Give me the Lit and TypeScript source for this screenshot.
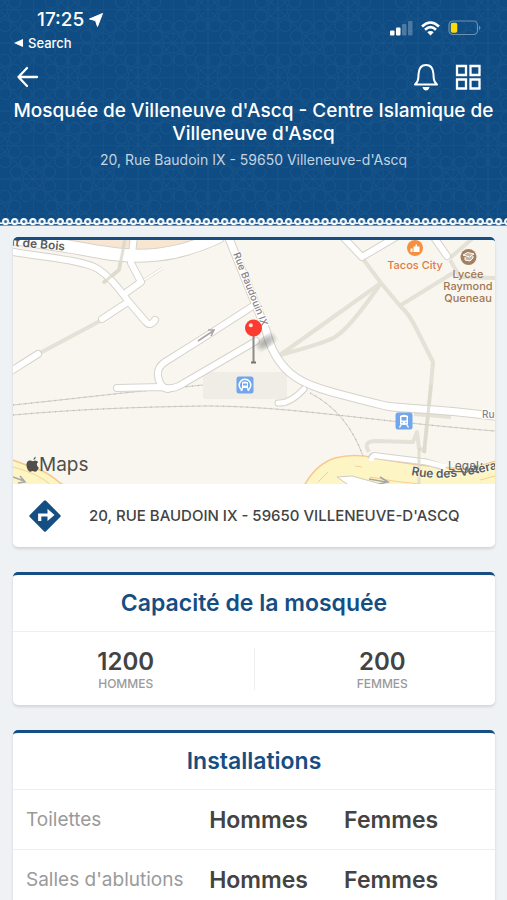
import { LitElement, html, css, svg } from "lit";
import { customElement } from "lit/decorators.js";

const ROADS = [
  { d: "M8 238 C40 241 66 246 100 252 C140 259 175 257 218 237", w: 12 },
  { d: "M8 251 C40 257 84 260 98 269 Q112 278 128 301 L146 322 Q150 327 155 320", w: 6 },
  { d: "M134 236 L131 263 L141 282 L127 292", w: 6 },
  { d: "M128 302 L102 319", w: 6 },
  { d: "M38 354 L8 373", w: 6 },
  { d: "M256 304 L200 340 L165 362 Q157 367 158 376 Q160 388 168 389", w: 6 },
  { d: "M256 341 L184 383 Q172 391 162 387 L117 388", w: 6 },
  { d: "M228 236 L266 330 Q272 357 290 373 C305 386 325 391 386 406 C400 409 430 407 500 417", w: 7 },
  { d: "M278 403 Q290 404 304 389", w: 5 },
  { d: "M342 236 L362 257 L396 237", w: 6 },
  { d: "M433 236 L447 256", w: 6 },
];

const PATHS = [
  "M125 238 L119 270 L103 283",
  "M100 321 L40 353",
  "M363 259 L381 283 L401 307 Q408 312 417 330 L433 362 L431 385 L424 453",
  "M381 283 L280 355",
  "M381 283 Q350 328 335 337 Q325 343 280 355",
  "M401 305 L453 273",
  "M450 258 L472 239",
  "M450 260 L460 277 L496 278",
  "M414 414 L451 417",
  "M369 452 Q362 441 376 441 L413 442 L417 432 L419 448 L426 452",
];

const RAILS = [
  "M13 405 L60 400 L123 393 L203 385",
  "M13 415 C80 409 140 407 203 406 C290 406 360 420 495 431",
  "M310 393 Q347 412 363 456",
];

const star = (x: number, y: number) => svg`
  <circle cx=${x} cy=${y} r="10"></circle>
  ${[0, 1, 2, 3, 4, 5, 6, 7].map((i) => {
    const a = ((i + 0.5) * Math.PI) / 4;
    return svg`<circle cx=${x + 18 * Math.cos(a)} cy=${y + 18 * Math.sin(a)} r="6"></circle>`;
  })}`;

@customElement("mosque-header")
class MosqueHeader extends LitElement {
  static styles = css`
    :host { display: block; position: relative; background: #0e4c83; color: #fff; }
    .pattern { position: absolute; inset: 0; width: 100%; height: 100%; }
    .content { position: relative; min-height: 218px; box-sizing: border-box; }
    .status { display: flex; justify-content: space-between; padding: 9px 26px 0 13px; height: 53px; box-sizing: border-box; }
    .clock { display: flex; align-items: center; gap: 5px; padding-left: 24px; font-size: 19px; line-height: 22px; font-weight: 500; }
    .back-app { display: flex; align-items: center; gap: 5px; color: inherit; text-decoration: none; font-size: 13px; line-height: 24px; font-weight: 500; }
    .signals { display: flex; gap: 8px; align-items: center; height: 38px; }
    .bar { display: flex; justify-content: space-between; padding: 10px 25px 0 16px; }
    .actions { display: flex; gap: 16px; }
    button { background: none; border: 0; padding: 0; color: inherit; display: flex; align-items: center; height: 28px; }
    h1 { margin: 8px 12px 0; font-size: 19px; line-height: 23px; font-weight: 500; text-align: center; }
    p { margin: 5px 12px 0; font-size: 14px; line-height: 20px; text-align: center; color: #c3d3e1; }
    .trim { display: block; position: relative; width: 100%; height: 8px; }
    svg { display: block; }
  `;
  render() {
    return html`
      <svg class="pattern" aria-hidden="true">
        <defs>
          <pattern id="stars" x="33" y="9" width="70" height="68" patternUnits="userSpaceOnUse">
            <g fill="none" stroke="#2a6496" stroke-width="1" opacity=".35">
              ${star(0, 34)}${star(70, 34)}${star(35, 0)}${star(35, 68)}
              <path d="M0 0h70M0 34h70M0 0v68M35 0v68M0 34L35 0L70 34L35 68Z"></path>
            </g>
          </pattern>
        </defs>
        <rect width="100%" height="100%" fill="url(#stars)"></rect>
      </svg>
      <div class="content">
        <div class="status">
          <div>
            <div class="clock">17:25
              <svg width="14" height="14" viewBox="0 0 14 14"><path d="M13.500.5L8.500 13.500L6.500 7.600L.5 6Z" fill="#fff" stroke="#fff" stroke-linejoin="round"></path></svg>
            </div>
            <a class="back-app" href="#search">
              <svg width="10" height="8" viewBox="0 0 10 8"><path d="M1 4L10 0V8Z" fill="#fff"></path></svg>Search</a>
          </div>
          <div class="signals">
            <svg width="23" height="16" viewBox="0 0 23 16" fill="#fff">
              <rect x="0" y="10.500" width="4.500" height="5" rx="1"></rect>
              <rect x="6" y="7.500" width="4.500" height="8" rx="1"></rect>
              <rect x="12" y="4" width="4.500" height="11.500" rx="1" opacity=".25"></rect>
              <rect x="18" y="1" width="4.500" height="14.500" rx="1" opacity=".25"></rect>
            </svg>
            <svg width="19" height="15" viewBox="0 0 19 15" fill="none" stroke="#fff" stroke-width="2.600">
              <path d="M1 5.500Q9.500-2.500 18 5.500M4 8.800Q9.500 3.600 15 8.800"></path>
              <path d="M6.300 11.300Q9.500 8.500 12.700 11.300L9.500 14.500Z" fill="#fff" stroke="none"></path>
            </svg>
            <svg width="33" height="16" viewBox="0 0 33 16">
              <rect x="1" y="1" width="28.500" height="13.500" rx="4" fill="none" stroke="#6d90b1" stroke-width="1.200"></rect>
              <rect x="2.800" y="2.700" width="6.500" height="10" rx="1.800" fill="#fbd90c"></rect>
              <path d="M31 5.500Q34 7.800 31 10.200Z" fill="#6d90b1"></path>
            </svg>
          </div>
        </div>
        <div class="bar">
          <button aria-label="Retour">
            <svg width="23" height="22" viewBox="0 0 23 22" fill="none" stroke="#fff" stroke-width="2.300" stroke-linecap="round" stroke-linejoin="round"><path d="M21 11H2.500M11 2L2.500 11L11 20"></path></svg>
          </button>
          <div class="actions">
            <button aria-label="Notifications">
              <svg width="26" height="28" viewBox="0 0 26 28" fill="none" stroke="#fff" stroke-width="2" stroke-linejoin="round">
                <path d="M2 21.500Q5 19 5.300 15L5.600 10.500Q6.300 2 13 2Q19.700 2 20.400 10.500L20.700 15Q21 19 24 21.500Z"></path>
                <path d="M9.500 24H16.500Q15.500 27.500 13 27.500Q10.500 27.500 9.500 24Z" fill="#fff" stroke="none"></path>
              </svg>
            </button>
            <button aria-label="Menu">
              <svg width="27" height="27" viewBox="0 0 27 27" fill="none" stroke="#fff" stroke-width="2.300">
                <path d="M2 2h9v9h-9zM15.500 2h9v9h-9zM2 15.500h9v9h-9zM15.500 15.500h9v9h-9z"></path>
              </svg>
            </button>
          </div>
        </div>
        <h1>Mosquée de Villeneuve d'Ascq - Centre Islamique de Villeneuve d'Ascq</h1>
        <p>20, Rue Baudoin IX - 59650 Villeneuve-d'Ascq</p>
      </div>
      <svg class="trim" aria-hidden="true">
        <defs>
          <pattern id="lace" x="1" width="9.130" height="8" patternUnits="userSpaceOnUse">
            <path d="M0 7.500H10" stroke="#6f95b8" stroke-width="1"></path>
            <path d="M0 5L1.500 5.500M9.130 5L7.600 5.500" stroke="#fff" stroke-width="1.800"></path>
            <circle cx="4.560" cy="3.600" r="2.600" fill="#2f6698" stroke="#fff" stroke-width="2"></circle>
          </pattern>
        </defs>
        <rect width="100%" height="8" fill="url(#lace)"></rect>
      </svg>`;
  }
}

@customElement("mosque-map")
class MosqueMap extends LitElement {
  static styles = css`
    :host { display: block; }
    svg { display: block; width: 100%; height: 244px; font-family: Inter, "Liberation Sans", sans-serif; }
    .poi { font-size: 11px; font-weight: 500; text-anchor: middle; }
    .street { font-size: 12px; font-weight: 600; fill: #5c5b59; paint-order: stroke; stroke: #fff; stroke-width: 1px; }
    .lane { font-size: 10px; font-weight: 500; fill: #86848a; paint-order: stroke; stroke: #fff; stroke-width: 2px; }
    .brand { font-size: 19px; fill: #504f4c; }
    .legal { font-size: 12px; fill: #6b6a63; text-decoration: underline; }
  `;
  render() {
    return html`
      <svg viewBox="13 240 482 244" preserveAspectRatio="xMidYMid slice" role="img" aria-label="Plan">
        <defs>
          <filter id="soft"><feGaussianBlur stdDeviation="2.500"></feGaussianBlur></filter>
          <path id="lane" d="M233 254 L258 317 Q262 327 266 345"></path>
          <path id="vets" d="M411 475 C440 481 470 477 515 464"></path>
        </defs>
        <rect x="13" y="240" width="482" height="244" fill="#f9f6ef"></rect>
        <path d="M60 238L215 236Q180 253 150 252Q110 252 60 240Z" fill="#f8e6d2"></path>
        <rect x="203" y="372" width="84" height="27" rx="3" fill="#f0ece6"></rect>
        <path d="M304 486Q316 464 335 458Q355 453 375 458Q430 468 470 469L496 461V486Z" fill="#fdf6c4" stroke="#f6c88c" stroke-width="1.500"></path>
        <path d="M10 459Q26 465 40 470Q50 474 60 483L66 486H10Z" fill="#fdf6c4" stroke="#f6c88c" stroke-width="1.500"></path>
        <g fill="none" stroke="#f8cf93" stroke-width="1">
          <path d="M13 467Q40 474 52 486M318 482L328 472M355 466L362 467M370 477Q395 482 420 484M480 480L495 476"></path>
        </g>
        <path d="M337 477L352 476L388 486H350Z" fill="#fff" stroke="#cfcbbd" stroke-width="1"></path>
        <g fill="none" stroke="#e4e1d6" stroke-width="4" stroke-linejoin="round">${PATHS.map((d) => svg`<path d=${d}></path>`)}</g>
        <path d="M141 282L163 268" stroke="#dedbd2" stroke-width="3"></path>
        <path d="M141 282L163 268" stroke="#fff" stroke-width="1.500"></path>
        <g fill="none" stroke="#b9b5b1" stroke-width="1">
          ${RAILS.map((d) => svg`<path d=${d} opacity=".65"></path><path d=${d} stroke-width="1.600" stroke-dasharray="1 5" opacity=".7"></path>`)}
        </g>
        <g fill="none" stroke="#d6d3cb" stroke-linecap="round" stroke-linejoin="round">${ROADS.map((r) => svg`<path d=${r.d} stroke-width=${r.w + 2}></path>`)}</g>
        <g fill="none" stroke="#fff" stroke-linecap="round" stroke-linejoin="round">${ROADS.map((r) => svg`<path d=${r.d} stroke-width=${r.w}></path>`)}</g>
        <path d="M371 459Q372 454 378 456L426 462L443 467" fill="none" stroke="#d6d3cb" stroke-width="7"></path>
        <path d="M371 461Q372 454 378 456L426 462L446 467" fill="none" stroke="#fff" stroke-width="5"></path>
        <path d="M125 240L119 270L103 283M431 385L424 453M419 448V484" fill="none" stroke="#dcd8ca" stroke-width="3" opacity=".8"></path>
        <g fill="none" stroke="#a9a7a5" stroke-width="1.600">
          <path d="M198 341L213 331M208 330L214 330L211 336"></path>
          <path d="M13 477L24 481M20 476L25 482L18 483M369 479L386 482M380 477L388 482L379 484"></path>
        </g>

        <text class="street" transform="rotate(5 13 244)" x="11" y="246">ft de Bois</text>
        <text class="lane"><textPath href="#lane">Rue Baudouin IX</textPath></text>
        <text class="lane" x="482" y="418">Rue</text>

        <circle cx="415" cy="248" r="8" fill="#f59042"></circle>
        <path d="M410.500 252V248.500H412.500V252ZM413.500 252V246.500H415.500V244.500H417V246.500H419.500V252Z" fill="#fff"></path>
        <text class="poi" x="415" y="269" fill="#e07b45">Tacos City</text>
        <circle cx="468.500" cy="257" r="8" fill="#a3805f"></circle>
        <path d="M463 255L467.500 252.500L474 254L469.500 257ZM465 257V260L470 261L473 258V256" fill="#fff" fill-opacity=".4" stroke="#fff" stroke-width="1"></path>
        <g class="poi" fill="#a07656">
          <text x="468" y="278">Lycée</text>
          <text x="468" y="290">Raymond</text>
          <text x="468" y="302">Queneau</text>
        </g>

        <g>
          <rect x="236.500" y="376.500" width="17" height="17" rx="2.500" fill="#71a5ec"></rect>
          <path d="M242.500 390.300A5.800 5.800 0 1 1 247.500 390.300" fill="none" stroke="#fff" stroke-width="1.500"></path>
          <path d="M242 383Q242 381.500 245 381.500Q248 381.500 248 383V388H242Z" fill="#fff"></path>
          <path d="M242.500 388L241 391M247.500 388L249 391" stroke="#fff" stroke-width="1.200"></path>
          <path d="M243 383.500H247V385.500H243Z" fill="#71a5ec"></path>
        </g>
        <g>
          <rect x="395.500" y="412.500" width="17" height="17" rx="2.500" fill="#71a5ec"></rect>
          <path d="M400 416Q404 413.500 408 416V424Q404 426 400 424Z" fill="#fff"></path>
          <path d="M401.500 424L399.500 427.500M406.500 424L408.500 427.500" stroke="#fff" stroke-width="1.400"></path>
          <path d="M401.500 417H406.500V420.500H401.500Z" fill="#71a5ec"></path>
          <circle cx="402" cy="422.500" r=".7" fill="#71a5ec"></circle><circle cx="406" cy="422.500" r=".7" fill="#71a5ec"></circle>
        </g>

        <ellipse cx="266" cy="342" rx="10" ry="5" transform="rotate(-35 266 342)" fill="#333" opacity=".35" filter="url(#soft)"></ellipse>
        <path d="M253.500 335V362" stroke="#8b8a88" stroke-width="2"></path>
        <path d="M251 362.500H256" stroke="#77756f" stroke-width="2"></path>
        <circle cx="253.500" cy="328" r="8.500" fill="#fb3b30"></circle>
        <circle cx="250.800" cy="325.300" r="2" fill="#fff" opacity=".85"></circle>

        <path d="M35.800 456.500Q36 458.800 33.500 460Q33.200 457.800 35.800 456.500ZM33 461.200Q36 459.300 38.200 462Q35.200 464.500 38.800 467.800Q36.500 473 34.300 471.500Q32.700 470.700 31 471.500Q28.500 472.500 26.800 467.500Q25.500 462 29 460.600Q30.500 460 33 461.200Z" fill="#504f4c"></path>
        <text class="brand" x="39" y="471">Maps</text>
        <text class="street"><textPath href="#vets">Rue des Vétérans</textPath></text>
        <text class="legal" x="448" y="470">Legal</text>
      </svg>`;
  }
}

@customElement("app-root")
class AppRoot extends LitElement {
  static styles = css`
    :host { display: block; height: 100vh; overflow-y: auto; scrollbar-width: none; background: #eef2f5; font-family: Inter, "Liberation Sans", sans-serif; color: #434343; }
    main { display: flex; flex-direction: column; gap: 25px; padding: 11px 12px 25px 13px; }
    .card { background: #fff; border-top: 3px solid #154e83; border-radius: 5px; overflow: hidden; box-shadow: 0 2px 3px #0000001f; }
    .address { display: flex; align-items: center; gap: 27px; width: 100%; height: 63px; padding: 0 15px; box-sizing: border-box; color: inherit; text-decoration: none; font-size: 15px; line-height: 20px; font-weight: 500; }
    .address svg { flex: none; }
    h2 { margin: 0; font-size: 23px; line-height: 56px; font-weight: 600; text-align: center; color: #154e83; border-bottom: 1px solid #eceff1; }
    .capacity { display: flex; margin: 0; padding: 16px 0 15px; text-align: center; }
    .group { flex: 1; display: flex; flex-direction: column-reverse; justify-content: flex-end; padding-right: 15px; height: 42px; }
    .group + .group { padding: 0 0 0 15px; border-left: 1px solid #eceff1; }
    dd { margin: 0; font-size: 24px; line-height: 28px; font-weight: 600; }
    dt { font-size: 12px; line-height: 16px; font-weight: 500; color: #9a9a9a; }
    table { width: 100%; table-layout: fixed; border-collapse: collapse; }
    tr + tr { border-top: 1px solid #eceff1; }
    th, td { height: 59px; padding: 0; text-align: left; }
    th { width: 38%; padding-left: 13px; font-size: 19px; font-weight: 400; color: #9a9a9a; }
    td { font-size: 23px; font-weight: 600; }
    .men { width: 28%; }
  `;
  render() {
    const rooms = ["Toilettes", "Salles d'ablutions"];
    return html`
      <mosque-header></mosque-header>
      <main>
        <section class="card">
          <mosque-map></mosque-map>
          <a class="address" href="#itineraire">
            <svg width="34" height="34" viewBox="0 0 34 34">
              <rect x="5.500" y="5.500" width="23" height="23" rx="1.500" transform="rotate(45 17 17)" fill="#154e83"></rect>
              <path d="M11.700 22V16H21" fill="none" stroke="#fff" stroke-width="3.200"></path>
              <path d="M19.500 9.800L26.500 16L19.500 22Z" fill="#fff"></path>
            </svg>
            <span>20, RUE BAUDOIN IX - 59650 VILLENEUVE-D'ASCQ</span>
          </a>
        </section>
        <section class="card">
          <h2>Capacité de la mosquée</h2>
          <dl class="capacity">
            <div class="group"><dt>HOMMES</dt><dd>1200</dd></div>
            <div class="group"><dt>FEMMES</dt><dd>200</dd></div>
          </dl>
        </section>
        <section class="card">
          <h2>Installations</h2>
          <table>
            ${rooms.map((r) => html`<tr><th scope="row">${r}</th><td class="men">Hommes</td><td>Femmes</td></tr>`)}
          </table>
        </section>
      </main>`;
  }
}
